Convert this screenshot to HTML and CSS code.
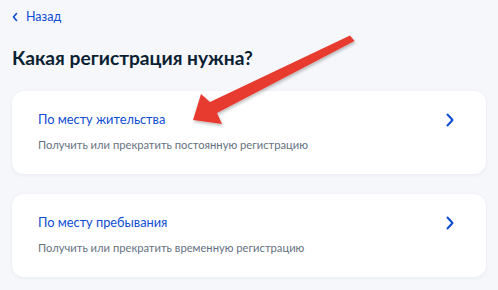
FILE: index.html
```html
<!DOCTYPE html>
<html lang="ru">
<head>
  <meta charset="UTF-8">
  <meta name="viewport" content="width=device-width, initial-scale=1.0">
  <title>Какая регистрация нужна?</title>
  <link rel="stylesheet" href="styles.css">
</head>
<body>
  <a class="back-link" href="#">
    <svg class="back-icon" viewBox="0 0 6 10" width="6" height="10"><path d="M4.5 1.5 1.5 5l3 3.5" fill="none" stroke="currentColor" stroke-width="1.6" stroke-linecap="round" stroke-linejoin="round"/></svg>
    <span>Назад</span>
  </a>
  <h1 class="page-title">Какая регистрация нужна?</h1>
  <div class="options">
    <a class="option-card" href="#">
      <div class="option-text">
        <div class="option-title">По месту жительства</div>
        <div class="option-desc">Получить или прекратить постоянную регистрацию</div>
      </div>
      <svg class="option-chevron" viewBox="0 0 8 14" width="8" height="14"><path d="M1.5 1.5 6.5 7l-5 5.5" fill="none" stroke="currentColor" stroke-width="2" stroke-linecap="round" stroke-linejoin="round"/></svg>
    </a>
    <a class="option-card" href="#">
      <div class="option-text">
        <div class="option-title">По месту пребывания</div>
        <div class="option-desc">Получить или прекратить временную регистрацию</div>
      </div>
      <svg class="option-chevron" viewBox="0 0 8 14" width="8" height="14"><path d="M1.5 1.5 6.5 7l-5 5.5" fill="none" stroke="currentColor" stroke-width="2" stroke-linecap="round" stroke-linejoin="round"/></svg>
    </a>
  </div>

  <!-- pointer drawn on top of the screenshot -->
  <svg class="pointer-arrow" viewBox="0 0 498 290" width="498" height="290">
    <defs>
      <filter id="arrow-shadow" x="-10%" y="-10%" width="130%" height="130%">
        <feDropShadow dx="1" dy="2" stdDeviation="1.5" flood-color="#000" flood-opacity="0.25"/>
      </filter>
    </defs>
    <polygon filter="url(#arrow-shadow)" fill="#e63a2e" points="350,35.5 354.5,41 217,113 222,124 193,120 201,94 210,102"/>
  </svg>
</body>
</html>
```

FILE: styles.css
```css
* {
  margin: 0;
  padding: 0;
  box-sizing: border-box;
}
body {
  font-family: Lato, 'Noto Sans', sans-serif;
  background: #f5f7fb;
  color: #0b1f33;
  width: 498px;
  height: 290px;
  padding: 9px 12px 0;
  position: relative;
  overflow: hidden;
}
.back-link {
  display: flex;
  align-items: center;
  gap: 8px;
  color: #0d4cd3;
  text-decoration: none;
  font-size: 12.5px;
  line-height: 16px;
}
.back-icon {
  display: block;
}
.page-title {
  font-size: 19.2px;
  font-weight: 700;
  line-height: 24px;
  margin-top: 21px;
  color: #0b1f33;
}
.options {
  display: flex;
  flex-direction: column;
  gap: 20px;
  margin-top: 21px;
}
.option-card {
  display: flex;
  align-items: flex-start;
  justify-content: space-between;
  background: #fff;
  border-radius: 12px;
  box-shadow: 0 1px 4px rgba(11, 31, 51, 0.06);
  padding: 19px 32px 19px 26px;
  text-decoration: none;
  height: 83px;
}
.option-title {
  color: #0d4cd3;
  font-size: 12.8px;
  line-height: 18px;
}
.option-desc {
  color: #66727f;
  font-size: 11.2px;
  line-height: 16px;
  margin-top: 9px;
}
.option-chevron {
  color: #0d4cd3;
  margin-top: 3px;
  display: block;
}
.pointer-arrow {
  position: absolute;
  left: 0;
  top: 0;
  pointer-events: none;
}
```
